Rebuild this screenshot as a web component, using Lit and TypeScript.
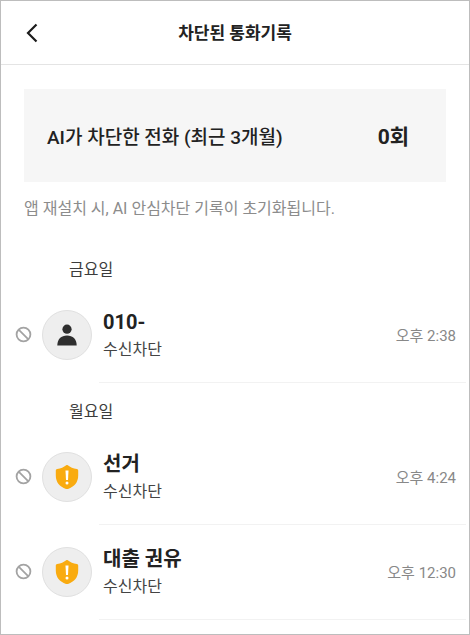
import { LitElement, html, css, svg } from "lit";
import { customElement } from "lit/decorators.js";

interface Call {
  name: string;
  status: string;
  time: string;
  kind: "person" | "warning";
}

interface Day {
  label: string;
  calls: Call[];
}

const days: Day[] = [
  {
    label: "금요일",
    calls: [{ name: "010-", status: "수신차단", time: "오후 2:38", kind: "person" }],
  },
  {
    label: "월요일",
    calls: [
      { name: "선거", status: "수신차단", time: "오후 4:24", kind: "warning" },
      { name: "대출 권유", status: "수신차단", time: "오후 12:30", kind: "warning" },
    ],
  },
];

const personIcon = svg`
  <circle cx="13" cy="7.200" r="4.600" fill="#2e2e2e" />
  <path d="M3.300 23.600C3.300 17.200 7.200 13.600 13 13.600S22.700 17.200 22.700 23.600Z" fill="#2e2e2e" />`;

const shieldIcon = svg`
  <path d="M12.200 1.300C12.700 0.900 13.300 0.900 13.800 1.300C16.200 3.200 19.200 4.600 22.800 5.100C23.700 5.200 24.200 5.800 24.200 6.700V11.500C24.200 18.200 20.300 22.800 14 24.900C13.300 25.100 12.700 25.100 12 24.900C5.700 22.800 1.800 18.200 1.800 11.500V6.700C1.800 5.800 2.300 5.200 3.200 5.100C6.800 4.600 9.800 3.200 12.200 1.300Z" fill="#f9ab10" />
  <path d="M11.500 6.600H14.500L14 16H12Z" fill="#fff" />
  <circle cx="13" cy="18.900" r="1.500" fill="#fff" />`;

@customElement("app-root")
export class AppRoot extends LitElement {
  static styles = css`
    :host {
      display: block;
      box-sizing: border-box;
      min-height: 100vh;
      border: 1px solid #bdbdbd;
      background: #fff;
      color: #222;
      font-family: Roboto, "Noto Sans CJK KR", sans-serif;
      font-size: 16px;
      line-height: 24px;
    }
    .bar {
      display: grid;
      grid-template-columns: 46px 1fr 46px;
      align-items: center;
      height: 63px;
      padding: 0 8px;
      border-bottom: 1px solid #e4e4e4;
    }
    .back {
      display: flex;
      align-items: center;
      justify-content: center;
      height: 48px;
      padding: 0;
      border: 0;
      background: none;
      color: #1c1c1c;
      cursor: pointer;
    }
    .title {
      margin: 0;
      text-align: center;
      font-size: 17px;
      font-weight: 700;
    }
    .summary {
      display: flex;
      align-items: center;
      justify-content: space-between;
      margin: 24px 23px 15px;
      padding: 34px 37px 30px 23px;
      background: #f6f6f6;
      font-size: 19px;
      line-height: 29px;
      font-weight: 500;
    }
    .count {
      font-size: 21px;
      font-weight: 700;
    }
    .note {
      margin: 0 23px 20px;
      color: #8c8c8c;
    }
    .day {
      margin: 0;
      padding: 17px 0 6px 68px;
      font-size: 16px;
      font-weight: 400;
      color: #3c3c3c;
    }
    .calls {
      margin: 0;
      padding: 0;
      list-style: none;
    }
    .call {
      display: flex;
      align-items: center;
      padding: 0 3px 0 14px;
    }
    .blocked {
      flex: none;
      margin: 0 10px 2px 0;
    }
    .avatar {
      display: flex;
      flex: none;
      align-items: center;
      justify-content: center;
      box-sizing: border-box;
      width: 50px;
      height: 50px;
      margin: 0 7px 2px 0;
      border: 1px solid #e0e0e0;
      border-radius: 50%;
      background: #eee;
    }
    .body {
      display: flex;
      flex: 1;
      align-items: center;
      justify-content: space-between;
      box-sizing: border-box;
      height: 95px;
      padding: 2px 10px 0 4px;
      border-bottom: 1px solid #f2f2f2;
    }
    .name {
      font-size: 20px;
      line-height: 28px;
      font-weight: 700;
    }
    .status {
      line-height: 28px;
      color: #444;
    }
    .time {
      font-size: 15px;
      color: #888;
    }
  `;

  private renderCall(call: Call) {
    return html`
      <li class="call">
        <svg class="blocked" width="17" height="17" viewBox="0 0 17 17" fill="none" stroke="#a3a3a3" stroke-width="1.800" role="img" aria-label="차단됨">
          <circle cx="8.500" cy="8.500" r="6.900" />
          <path d="M3.600 3.600L13.400 13.400" />
        </svg>
        <span class="avatar">
          <svg width="26" height="26" viewBox="0 0 26 26" aria-hidden="true">
            ${call.kind === "person" ? personIcon : shieldIcon}
          </svg>
        </span>
        <div class="body">
          <div>
            <div class="name">${call.name}</div>
            <div class="status">${call.status}</div>
          </div>
          <time class="time">${call.time}</time>
        </div>
      </li>
    `;
  }

  render() {
    return html`
      <header class="bar">
        <button class="back" type="button" aria-label="뒤로">
          <svg width="12" height="20" viewBox="0 0 12 20" fill="none" stroke="currentColor" stroke-width="2.200" aria-hidden="true">
            <path d="M10.500 1.500L2 10L10.500 18.500" />
          </svg>
        </button>
        <h1 class="title">차단된 통화기록</h1>
      </header>
      <main>
        <section class="summary">
          <span>AI가 차단한 전화 (최근 3개월)</span>
          <span class="count">0회</span>
        </section>
        <p class="note">앱 재설치 시, AI 안심차단 기록이 초기화됩니다.</p>
        ${days.map(
          (day) => html`
            <section>
              <h2 class="day">${day.label}</h2>
              <ul class="calls">
                ${day.calls.map((call) => this.renderCall(call))}
              </ul>
            </section>
          `
        )}
      </main>
    `;
  }
}
